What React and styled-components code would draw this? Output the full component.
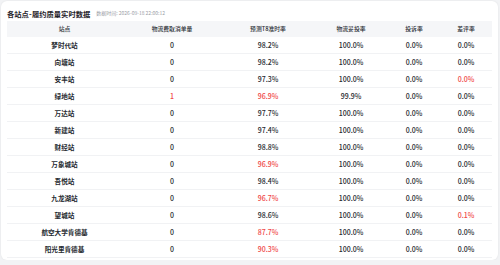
import React from 'react';
import styled, { createGlobalStyle } from 'styled-components';

const GlobalStyle = createGlobalStyle`
  html, body {
    margin: 0;
    padding: 0;
    background: #f2f3f5;
    font-family: "Noto Sans CJK SC", "Noto Sans", sans-serif;
  }
`;

const columns = [
  { key: 'name', label: '站点', width: 115 },
  { key: 'cancel', label: '物流费取消单量', width: 100 },
  { key: 'ontime', label: '预测T8准时率', width: 92 },
  { key: 'delivered', label: '物流妥投率', width: 74 },
  { key: 'complaint', label: '投诉率', width: 52 },
  { key: 'negative', label: '差评率', width: 52 },
];

// red flags mark values below target
const rows = [
  { name: '梦时代站', cancel: '0', ontime: '98.2%', delivered: '100.0%', complaint: '0.0%', negative: '0.0%' },
  { name: '向塘站', cancel: '0', ontime: '98.2%', delivered: '100.0%', complaint: '0.0%', negative: '0.0%' },
  { name: '安丰站', cancel: '0', ontime: '97.3%', delivered: '100.0%', complaint: '0.0%', negative: '0.0%', red: ['negative'] },
  { name: '绿地站', cancel: '1', ontime: '96.9%', delivered: '99.9%', complaint: '0.0%', negative: '0.0%', red: ['cancel', 'ontime'] },
  { name: '万达站', cancel: '0', ontime: '97.7%', delivered: '100.0%', complaint: '0.0%', negative: '0.0%' },
  { name: '新建站', cancel: '0', ontime: '97.4%', delivered: '100.0%', complaint: '0.0%', negative: '0.0%' },
  { name: '财经站', cancel: '0', ontime: '98.8%', delivered: '100.0%', complaint: '0.0%', negative: '0.0%' },
  { name: '万象城站', cancel: '0', ontime: '96.9%', delivered: '100.0%', complaint: '0.0%', negative: '0.0%', red: ['ontime'] },
  { name: '吾悦站', cancel: '0', ontime: '98.4%', delivered: '100.0%', complaint: '0.0%', negative: '0.0%' },
  { name: '九龙湖站', cancel: '0', ontime: '96.7%', delivered: '100.0%', complaint: '0.0%', negative: '0.0%', red: ['ontime'] },
  { name: '望城站', cancel: '0', ontime: '98.6%', delivered: '100.0%', complaint: '0.0%', negative: '0.1%', red: ['negative'] },
  { name: '航空大学肯德基', cancel: '0', ontime: '87.7%', delivered: '100.0%', complaint: '0.0%', negative: '0.0%', red: ['ontime'] },
  { name: '阳光里肯德基', cancel: '0', ontime: '90.3%', delivered: '100.0%', complaint: '0.0%', negative: '0.0%', red: ['ontime'] },
];

const App = () => (
  <>
    <GlobalStyle />
    <Card>
      <TitleBar>
        <Title>各站点 - 履约质量实时数据</Title>
        <Stamp>数据时间: 2026-09-18 22:00:12</Stamp>
      </TitleBar>
      <Table>
        <HeadRow>
          {columns.map((c) => (
            <HeadCell key={c.key} $width={c.width}>{c.label}</HeadCell>
          ))}
        </HeadRow>
        {rows.map((r) => (
          <Row key={r.name}>
            {columns.map((c) => (
              <Cell
                key={c.key}
                $width={c.width}
                $alert={(r.red || []).includes(c.key)}
                $name={c.key === 'name'}
              >
                {r[c.key]}
              </Cell>
            ))}
          </Row>
        ))}
      </Table>
    </Card>
  </>
);

const Card = styled.div`
  margin: 1px 0 0 1px;
  width: 485px;
  height: 259px;
  padding: 0 6px;
  background: #ffffff;
  border-radius: 6px;
  box-shadow: 0 0 2px rgba(0, 0, 0, 0.08);
`;

const TitleBar = styled.div`
  display: flex;
  align-items: center;
  gap: 6px;
  height: 14px;
  padding-top: 6px;
`;

const Title = styled.div`
  font-size: 7.3px;
  font-weight: 700;
  color: #1f2329;
  line-height: 14px;
  word-spacing: -1.5px;
`;

const Stamp = styled.div`
  font-size: 5px;
  color: #9a9ea6;
  line-height: 14px;
  margin-top: -2px;
`;

const Table = styled.div`
  display: flex;
  flex-direction: column;
`;

const HeadRow = styled.div`
  display: flex;
  height: 16px;
  align-items: center;
  background: #f5f6f8;
`;

const HeadCell = styled.div`
  width: ${({ $width }) => $width}px;
  text-align: center;
  font-size: 5.8px;
  line-height: 16px;
  color: #2b2f36;
  font-weight: 500;
`;

const Row = styled.div`
  display: flex;
  align-items: center;
  height: 17px;
  border-bottom: 1px solid #f1f2f4;
  box-sizing: border-box;
`;

const Cell = styled.div`
  width: ${({ $width }) => $width}px;
  text-align: center;
  line-height: 16px;
  font-size: ${({ $name }) => ($name ? '6.6px' : '7px')};
  font-weight: ${({ $name }) => ($name ? 700 : 500)};
  color: ${({ $alert }) => ($alert ? '#f04848' : '#262a30')};
`;

export default App;
